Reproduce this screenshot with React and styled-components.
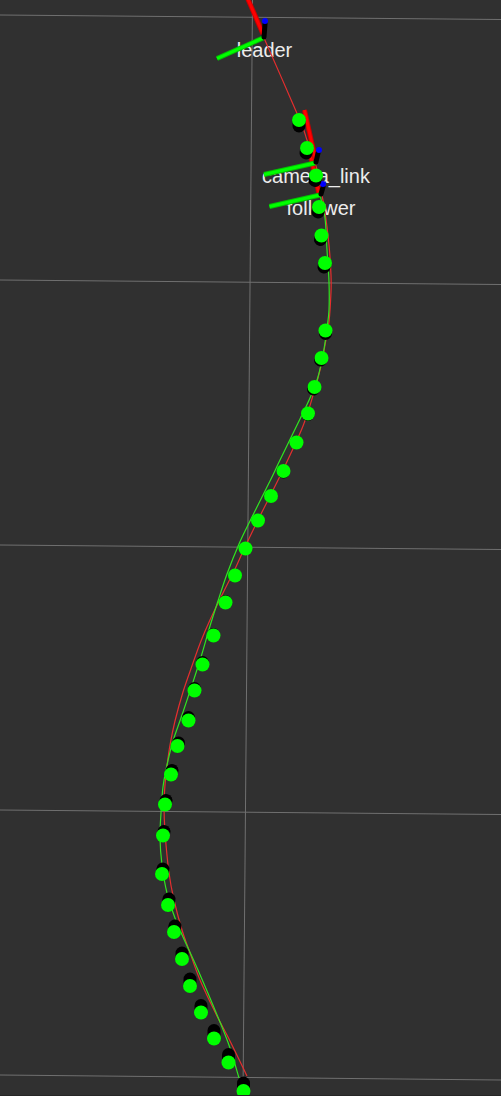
import React from "react";
import styled, { createGlobalStyle } from "styled-components";

const GlobalStyle = createGlobalStyle`
  body {
    margin: 0;
    background: #303030;
  }
`;

const Viewport = styled.main`
  width: 100%;
  overflow: hidden;
  background: #303030;
`;

const Scene = styled.svg`
  display: block;
  width: 100%;
  height: auto;
`;

const GridLine = styled.line`
  stroke: #707070;
  stroke-width: 1;
`;

const FrameLabel = styled.text`
  fill: #ececec;
  font-family: "Liberation Sans", Arial, sans-serif;
  font-size: 20px;
  text-anchor: middle;
`;

const TrailPath = styled.path`
  fill: none;
  stroke: ${(p) => p.$color};
  stroke-width: 1.2;
`;

const BarEdge = styled.line`
  stroke: ${(p) => p.$color};
  stroke-width: 5;
`;

const BarCore = styled.line`
  stroke: ${(p) => p.$color};
  stroke-width: 3;
`;

const Post = styled.line`
  stroke: #000;
  stroke-width: 5;
  stroke-linecap: round;
`;

const PostTip = styled.circle`
  fill: #00f;
`;

const MarkerSide = styled.line`
  stroke: #000;
  stroke-width: 13;
  stroke-linecap: round;
`;

const MarkerTop = styled.circle`
  fill: #00ff00;
`;

const BottomEdge = styled.line`
  stroke: #262626;
  stroke-width: 1;
`;

const gridLines = [
  [0, 15, 501, 19.5],
  [0, 280, 501, 284.5],
  [0, 545, 501, 549.5],
  [0, 810, 501, 814.5],
  [0, 1075, 501, 1080],
  [252.5, 0, 243, 1096],
];

const labels = [
  { name: "leader", x: 264.5, y: 57 },
  { name: "camera_link", x: 316, y: 183 },
  { name: "follower", x: 321, y: 215 },
];

const leaderTrail = [
  [264, 38], [299, 118], [307, 140], [316, 166], [321, 190], [325, 212],
  [329, 245], [331, 275], [331, 292], [329, 322], [325, 345], [321, 366],
  [314, 392], [303, 426], [283, 470], [258, 520], [245, 547], [235, 569],
  [222, 595], [210, 620], [201, 641], [193, 663], [183, 692], [175, 721],
  [170, 745], [167, 766], [165, 785], [164, 805], [165, 832], [169, 873],
  [174, 900], [182, 930], [189, 950], [200, 980], [216, 1014], [230, 1041],
  [247, 1076],
];

const followerTrail = [
  [320, 195], [325, 218], [327, 250], [329, 282], [329, 310], [327, 328],
  [324, 349], [318, 377], [310, 398], [300, 419], [280, 460], [270, 481],
  [250, 521], [239, 544], [227, 574], [218, 601], [210, 626], [201, 657],
  [192, 685], [182, 715], [173, 741], [167, 765], [163, 787], [161, 813],
  [160, 838], [162, 865], [167, 893], [175, 918], [183, 937], [198, 970],
  [220, 1022], [230, 1048], [239, 1078],
];

const frames = [
  { red: [244, -10, 263, 34], green: [263, 38, 217, 58.5], post: [264, 37, 265, 24], tip: [265, 21] },
  { red: [308, 144, 319, 194], green: [320, 195, 269.5, 206.5], post: [321, 194, 323, 187], tip: [323, 184] },
  { red: [304.5, 110, 316, 162], green: [315, 163, 264, 174.5], post: [316, 162, 318, 153], tip: [319, 150] },
];

// Each marker: centre x, centre y, and where the far end of its cylinder shows.
const markers = [
  [299, 120, 0, 6],
  [307, 148, -1, 5],
  [316, 175.5, -1, 5],
  [319, 207, -1, 5],
  [321.5, 235.5, -1, 4],
  [325, 263, -1, 4],
  [325.5, 330.5, 0, 3],
  [321.5, 358, -1, 2],
  [314.5, 387, -1, 2],
  [308, 413.5, 0, 1],
  [296.5, 442.5, 0, 0],
  [283.5, 471, 0, 1],
  [271, 496, 0, 0],
  [258, 520.5, 0, 0],
  [245.5, 548.5, 0, 0],
  [235, 575.5, 0, 0],
  [225.5, 602.5, 0, -1],
  [213.5, 635.5, 0, -1],
  [202.5, 664.5, 0, -2],
  [194.5, 690.5, 0, -2],
  [188.5, 720.5, 0, -3],
  [177.5, 746, 1, -3],
  [171, 774.5, 1, -4],
  [165, 804.5, 1, -4],
  [163, 835.5, 1, -4],
  [162, 874, 1, -5],
  [168, 905, 1, -6],
  [174, 932, 1, -6],
  [182, 959, 0, -6],
  [190, 986, 0, -7],
  [201, 1012.5, 0, -7],
  [214, 1038.5, 0, -8],
  [228.5, 1062.5, 0, -8],
  [243.5, 1091, 0, -8],
];

const ends = ([x1, y1, x2, y2]) => ({ x1, y1, x2, y2 });

// Catmull-Rom spline through the points, written as cubic Bézier segments.
function smoothPath(points) {
  return points.slice(1).reduce((d, [x, y], i) => {
    const [x0, y0] = points[Math.max(i - 1, 0)];
    const [x1, y1] = points[i];
    const [x3, y3] = points[Math.min(i + 2, points.length - 1)];
    const c1 = `${x1 + (x - x0) / 6} ${y1 + (y - y0) / 6}`;
    const c2 = `${x - (x3 - x1) / 6} ${y - (y3 - y1) / 6}`;
    return `${d} C ${c1} ${c2} ${x} ${y}`;
  }, `M ${points[0].join(" ")}`);
}

function Trail({ points, color }) {
  return <TrailPath $color={color} d={smoothPath(points)} />;
}

function AxisBar({ line, core, edge }) {
  return (
    <g>
      <BarEdge $color={edge} {...ends(line)} />
      <BarCore $color={core} {...ends(line)} />
    </g>
  );
}

function FrameAxes({ red, green, post, tip }) {
  return (
    <g>
      <AxisBar line={red} core="#ff0000" edge="#c80000" />
      <AxisBar line={green} core="#00ff00" edge="#00c400" />
      <Post {...ends(post)} />
      <PostTip cx={tip[0]} cy={tip[1]} r={3} />
    </g>
  );
}

function Marker({ x, y, dx, dy }) {
  return (
    <g>
      <MarkerSide x1={x} y1={y} x2={x + dx} y2={y + dy} />
      <MarkerTop cx={x} cy={y} r={7} />
    </g>
  );
}

export default function App() {
  return (
    <>
      <GlobalStyle />
      <Viewport>
        <Scene viewBox="0 0 501 1096" role="img" aria-label="Leader and follower trajectories">
          {gridLines.map((line, i) => (
            <GridLine key={i} {...ends(line)} />
          ))}
          {labels.map(({ name, x, y }) => (
            <FrameLabel key={name} x={x} y={y}>
              {name}
            </FrameLabel>
          ))}
          <Trail color="#e62e2e" points={leaderTrail} />
          <Trail color="#30e620" points={followerTrail} />
          {frames.map((frame, i) => (
            <FrameAxes key={i} {...frame} />
          ))}
          {markers.map(([x, y, dx, dy]) => (
            <Marker key={y} x={x} y={y} dx={dx} dy={dy} />
          ))}
          <BottomEdge x1={0} y1={1095.5} x2={501} y2={1095.5} />
        </Scene>
      </Viewport>
    </>
  );
}
